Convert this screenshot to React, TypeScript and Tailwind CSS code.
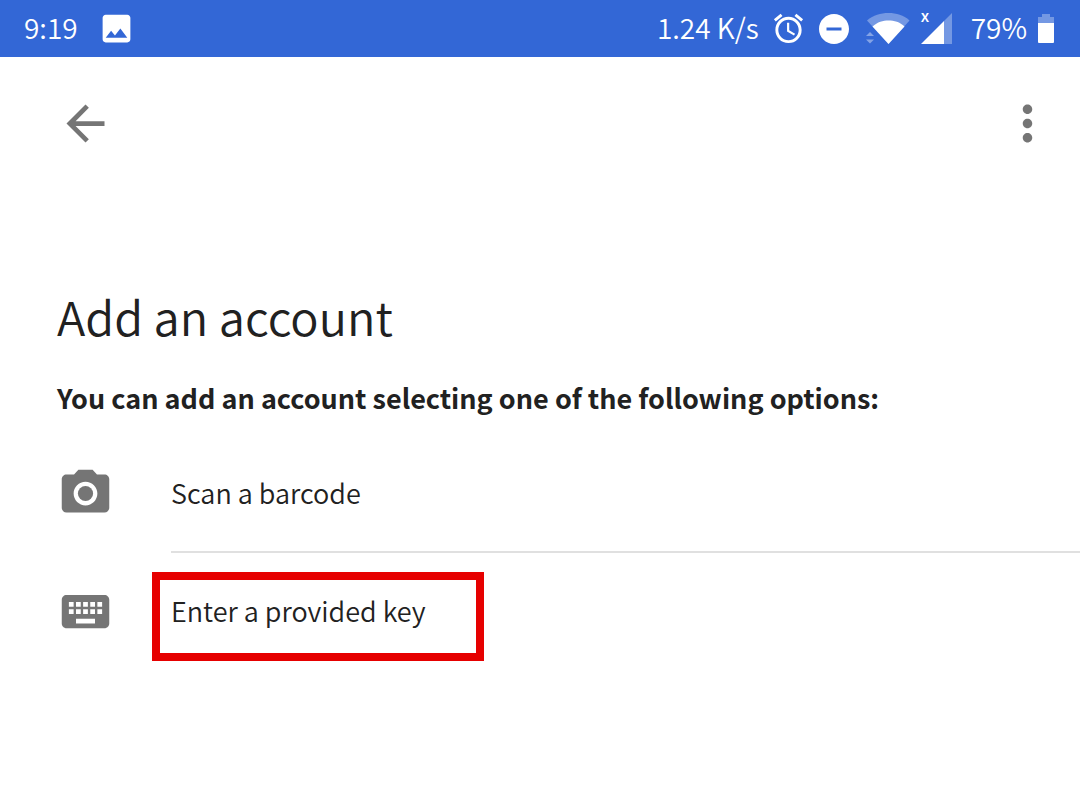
import type { ReactNode } from "react";
import {
  MdAlarm,
  MdArrowBack,
  MdDoNotDisturbOn,
  MdImage,
  MdMoreVert,
} from "react-icons/md";

function WifiIcon() {
  return (
    <svg width="44" height="34" viewBox="0 0 44 34" fill="#fff" role="img" aria-label="Wi-Fi">
      <path opacity=".32" d="M22.500 32 1 8.500C7.500 3 14.500 1 22.500 1S37.500 3 43.500 8.500Z" />
      <path d="M22.500 32 6.500 14.500C11.500 10 17 8.500 22.500 8.500S34 10 38.500 14.500Z" />
      <path opacity=".4" d="M0 24 4 20 8 24ZM0 27.500H8L4 31.500Z" />
    </svg>
  );
}

function SignalIcon() {
  return (
    <svg width="32" height="34" viewBox="0 0 32 34" fill="#fff" role="img" aria-label="Mobile signal">
      <path opacity=".32" d="M31 1V32H23V9Z" />
      <path d="M0 32 23 9V32Z" />
    </svg>
  );
}

function BatteryIcon() {
  return (
    <svg width="16" height="30" viewBox="0 0 16 30" fill="#fff" role="img" aria-label="Battery">
      <path opacity=".32" d="M4 0H12V3H16V9H0V3H4Z" />
      <path d="M0 9H16V28Q16 29 15 29H1Q0 29 0 28Z" />
    </svg>
  );
}

function CameraIcon() {
  return (
    <svg className="size-[57px]" viewBox="0 0 24 24" fill="currentColor" aria-hidden="true">
      <circle cx="12" cy="12" r="3.2" />
      <path d="M9 2 7.170 4H4c-1.100 0-2 .9-2 2v12c0 1.100.9 2 2 2h16c1.100 0 2-.9 2-2V6c0-1.100-.9-2-2-2h-3.170L15 2H9zm3 15c-2.760 0-5-2.240-5-5s2.240-5 5-5 5 2.240 5 5-2.240 5-5 5z" />
    </svg>
  );
}

function KeyboardIcon() {
  return (
    <svg className="size-[57px]" viewBox="0 0 24 24" fill="currentColor" aria-hidden="true">
      <path d="M20 5H4c-1.100 0-1.990.9-1.990 2L2 17c0 1.100.9 2 2 2h16c1.100 0 2-.9 2-2V7c0-1.100-.9-2-2-2zm-9 3h2v2h-2V8zm0 3h2v2h-2v-2zM8 8h2v2H8V8zm0 3h2v2H8v-2zm-1 2H5v-2h2v2zm0-3H5V8h2v2zm9 7H8v-2h8v2zm0-4h-2v-2h2v2zm0-3h-2V8h2v2zm3 3h-2v-2h2v2zm0-3h-2V8h2v2z" />
    </svg>
  );
}

function Option({ icon, label, highlighted }: { icon: ReactNode; label: string; highlighted?: boolean }) {
  return (
    <button type="button" className="relative flex h-[116px] w-full items-center gap-[57px] pl-[57px] text-left">
      <span className="text-[#757575]">{icon}</span>
      <span>{label}</span>
      {highlighted && (
        <span className="absolute top-[19px] left-[152px] h-[89px] w-[332px] border-8 border-[#e60000]" />
      )}
    </button>
  );
}

export default function App() {
  return (
    <div className="min-h-screen bg-white font-['Noto_Sans_CJK_SC',sans-serif] text-[27px] leading-10 font-[350] text-[#212121]">
      <header className="flex h-[57px] items-center justify-between bg-[#3367d6] pr-[26px] pl-6 text-[28px] text-white">
        <div className="flex items-center gap-5">
          <span className="pb-1">9:19</span>
          <MdImage className="size-[37px]" />
        </div>
        <div className="flex items-center">
          <span className="mr-3 pb-1">1.24 K/s</span>
          <MdAlarm className="mr-[10px] size-[35px]" />
          <MdDoNotDisturbOn className="mr-[14px] size-[36px]" />
          <WifiIcon />
          <span className="relative mr-[18px] ml-[11px]">
            <SignalIcon />
            <span className="absolute -top-[7px] left-0 text-base leading-5 font-medium">x</span>
          </span>
          <span className="mr-[11px] pb-1">79%</span>
          <BatteryIcon />
        </div>
      </header>
      <nav className="flex h-[133px] items-center justify-between pr-6 pl-[57px] text-[#757575]">
        <button type="button" aria-label="Back">
          <MdArrowBack className="size-[57px]" />
        </button>
        <button type="button" aria-label="More options">
          <MdMoreVert className="size-[57px]" />
        </button>
      </nav>
      <main className="pt-[94px]">
        <h1 className="pl-[57px] text-[47px] leading-[64px]">Add an account</h1>
        <p className="mt-[30px] mb-[17px] pl-[57px] font-bold">
          You can add an account selecting one of the following options:
        </p>
        <Option icon={<CameraIcon />} label="Scan a barcode" />
        <hr className="ml-[171px] border-t-2 border-[#e0e0e0]" />
        <Option icon={<KeyboardIcon />} label="Enter a provided key" highlighted />
      </main>
    </div>
  );
}
